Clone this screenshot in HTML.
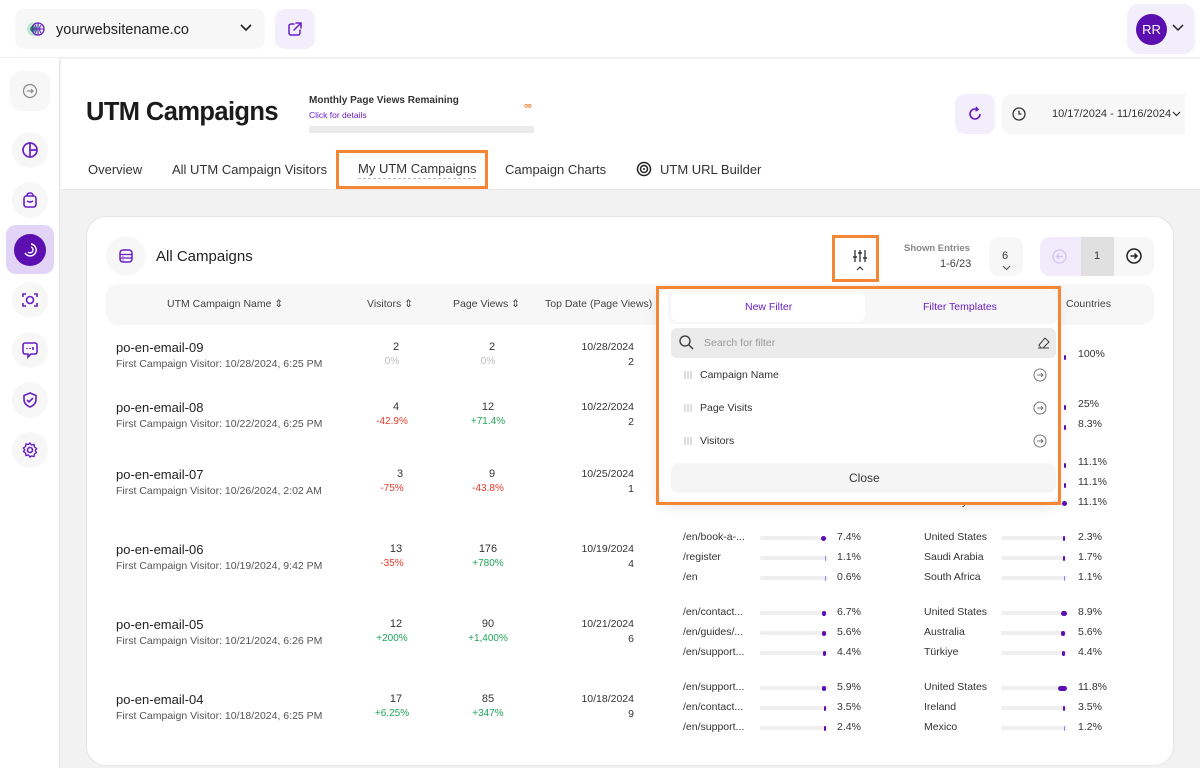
<!DOCTYPE html>
<html><head><meta charset="utf-8"><style>
*{box-sizing:border-box;margin:0;padding:0}
body{width:1200px;height:768px;overflow:hidden;background:#f2f2f2;font-family:"Liberation Sans",sans-serif;color:#222;position:relative}
.a{position:absolute}
.t{position:absolute;white-space:nowrap}
.ic{position:absolute;width:36px;height:36px;border-radius:50%;background:#f7f7f7;left:12px;display:flex;align-items:center;justify-content:center}
.name{font-size:13px;color:#222}
.sub{font-size:10.5px;color:#555}
.num{font-size:11px;color:#333;text-align:center;width:60px}
.red{color:#e53b2c}.grn{color:#1fa55a}.gry{color:#bbb}
.sm{font-size:10.5px;color:#333}
.bar{position:absolute;height:4px;background:#efefef;border-radius:2px}
.dot{position:absolute;height:5px;background:#5b0fb0;border-radius:3px;top:-0.5px}
</style></head><body>
<!-- top bar -->
<div class="a" style="left:0;top:0;width:1200px;height:58px;background:#fff;border-bottom:1px solid #eee"></div>
<div class="a" style="left:15px;top:9px;width:250px;height:40px;background:#f7f7f7;border-radius:10px"></div>
<svg class="a" style="left:26px;top:20px" width="20" height="18" viewBox="0 0 20 18"><circle cx="8" cy="9" r="7" fill="#bfe8cf"/><circle cx="7" cy="9" r="3" fill="#1aa35a"/><circle cx="12" cy="9" r="6" fill="none" stroke="#6a1fc4" stroke-width="1.3"/><path d="M6 9h12M12 3v12M9 5q3 4 0 8M15 5q-3 4 0 8" stroke="#6a1fc4" stroke-width="1" fill="none"/></svg>
<div class="t" style="left:56px;top:22px;font-size:14.5px;color:#222">yourwebsitename.co</div>
<svg class="a" style="left:239px;top:23px" width="14" height="10"><path d="M2 2l5 5 5-5" stroke="#222" stroke-width="1.6" fill="none"/></svg>
<div class="a" style="left:275px;top:9px;width:40px;height:40px;background:#f3eefc;border-radius:10px"></div>
<svg class="a" style="left:287px;top:21px" width="16" height="16" viewBox="0 0 16 16"><path d="M7 3H4a2 2 0 0 0-2 2v7a2 2 0 0 0 2 2h7a2 2 0 0 0 2-2V9M9 2h5v5M14 2L7 9" stroke="#6a1fc4" stroke-width="1.5" fill="none" stroke-linecap="round"/></svg>
<div class="a" style="left:1127px;top:4px;width:68px;height:50px;background:#f3eefc;border-radius:12px"></div>
<div class="a" style="left:1136px;top:14px;width:31px;height:31px;border-radius:50%;background:#5b0fb0;color:#fff;font-size:13px;display:flex;align-items:center;justify-content:center">RR</div>
<svg class="a" style="left:1172px;top:24px" width="12" height="8"><path d="M1 1l5 5 5-5" stroke="#222" stroke-width="1.5" fill="none"/></svg>
<!-- sidebar -->
<div class="a" style="left:0;top:58px;width:60px;height:710px;background:#fff;border-right:1px solid #e8e8e8"></div>
<div class="a" style="left:10px;top:71px;width:40px;height:40px;border-radius:12px;background:#f7f7f7"></div>
<svg class="a" style="left:22px;top:83px" width="16" height="16" viewBox="0 0 16 16"><circle cx="8" cy="8" r="6.5" fill="none" stroke="#888" stroke-width="1.2"/><path d="M5 8h6M9 6l2 2-2 2" stroke="#888" stroke-width="1.2" fill="none"/></svg>
<div class="ic" style="top:132px"><svg width="18" height="18" viewBox="0 0 18 18"><circle cx="9" cy="9" r="7" fill="none" stroke="#6a1fc4" stroke-width="1.7"/><path d="M9 2v14M9 9h7" stroke="#6a1fc4" stroke-width="1.7"/></svg></div>
<div class="ic" style="top:182px"><svg width="18" height="18" viewBox="0 0 18 18"><rect x="3" y="5" width="12" height="11" rx="2.5" fill="none" stroke="#6a1fc4" stroke-width="1.6"/><path d="M6 5q0-3 3-3t3 3M6 10q3 2 6 0" stroke="#6a1fc4" stroke-width="1.6" fill="none"/></svg></div>
<div class="a" style="left:6px;top:225px;width:48px;height:49px;border-radius:10px;background:#e2d4f6"></div>
<div class="a" style="left:14px;top:234px;width:32px;height:32px;border-radius:50%;background:#5b0fb0"></div>
<svg class="a" style="left:20px;top:240px" width="20" height="20" viewBox="0 0 20 20"><path d="M11 4a6 6 0 1 1-6 9" stroke="#fff" stroke-width="1.4" fill="none"/><path d="M11 7a3 3 0 1 1-3 5" stroke="#fff" stroke-width="1.4" fill="none"/></svg>
<div class="ic" style="top:282px"><svg width="18" height="18" viewBox="0 0 18 18"><path d="M2 6V3h3M13 3h3v3M16 12v3h-3M5 15H2v-3" stroke="#6a1fc4" stroke-width="1.6" fill="none"/><circle cx="9" cy="9" r="3.5" fill="none" stroke="#6a1fc4" stroke-width="1.6"/></svg></div>
<div class="ic" style="top:332px"><svg width="18" height="18" viewBox="0 0 18 18"><path d="M4 2h10a2 2 0 0 1 2 2v7a2 2 0 0 1-2 2h-4l-3 3v-3H4a2 2 0 0 1-2-2V4a2 2 0 0 1 2-2z" fill="none" stroke="#6a1fc4" stroke-width="1.6"/><path d="M6 7v1M9 7v1M12 6v3" stroke="#6a1fc4" stroke-width="1.6"/></svg></div>
<div class="ic" style="top:382px"><svg width="18" height="18" viewBox="0 0 18 18"><path d="M9 2l6 2.5v4q0 5-6 7.5-6-2.5-6-7.5v-4z" fill="none" stroke="#6a1fc4" stroke-width="1.6"/><path d="M6 9l2 2 4-4" stroke="#6a1fc4" stroke-width="1.6" fill="none"/></svg></div>
<div class="ic" style="top:432px"><svg width="18" height="18" viewBox="0 0 18 18"><circle cx="9" cy="9" r="2.5" fill="none" stroke="#6a1fc4" stroke-width="1.6"/><path d="M9 2l1.5 2 2.5-.5.5 2.5 2 1.5-1.2 2 1.2 2-2 1.5-.5 2.5-2.5-.5L9 16l-1.5-2-2.5.5-.5-2.5-2-1.5L3.7 9 2.5 7l2-1.5L5 3l2.5.5z" fill="none" stroke="#6a1fc4" stroke-width="1.4"/></svg></div>
<!-- header -->
<div class="a" style="left:61px;top:59px;width:1139px;height:131px;background:#fff;border-bottom:1px solid #e8e8e8"></div>
<div class="t" style="left:86px;top:98px;font-size:25.5px;font-weight:bold;color:#1b1b1b;letter-spacing:-0.6px">UTM Campaigns</div>
<div class="t" style="left:309px;top:95px;font-size:10px;font-weight:bold;color:#333">Monthly Page Views Remaining</div>
<div class="t" style="left:309px;top:110px;font-size:8.5px;color:#6a1fc4">Click for details</div>
<div class="t" style="left:524px;top:100px;font-size:11px;font-weight:bold;color:#f58634">∞</div>
<div class="a" style="left:309px;top:126px;width:225px;height:7px;background:#ebebeb"></div>
<div class="a" style="left:955px;top:94px;width:40px;height:40px;background:#f3eefc;border-radius:10px"></div>
<svg class="a" style="left:966px;top:105px" width="18" height="18" viewBox="0 0 18 18"><path d="M14 9a5 5 0 1 1-3-4.6" stroke="#6a1fc4" stroke-width="1.6" fill="none"/><path d="M10 2l2 2.5-2.5 1.5" stroke="#6a1fc4" stroke-width="1.6" fill="none"/></svg>
<div class="a" style="left:1002px;top:94px;width:183px;height:40px;background:#f7f7f7;border-radius:10px 0 0 10px"></div>
<svg class="a" style="left:1012px;top:107px" width="14" height="14"><circle cx="7" cy="7" r="6" stroke="#333" stroke-width="1.3" fill="none"/><path d="M7 3.5V7h2.5" stroke="#333" stroke-width="1.3" fill="none"/></svg>
<div class="t" style="left:1052px;top:108px;font-size:11px;color:#333">10/17/2024 - 11/16/2024</div>
<svg class="a" style="left:1172px;top:111px" width="9" height="6"><path d="M1 1l3.5 3.5L8 1" stroke="#333" stroke-width="1.2" fill="none"/></svg>
<!-- tabs -->
<div class="t" style="left:88px;top:162px;font-size:13px;color:#333">Overview</div>
<div class="t" style="left:172px;top:162px;font-size:13px;color:#333">All UTM Campaign Visitors</div>
<div class="a" style="left:336px;top:150px;width:152px;height:39px;border:3px solid #f58634"></div>
<div class="t" style="left:358px;top:161px;font-size:13px;color:#333;border-bottom:1px dashed #bbb;padding-bottom:2px">My UTM Campaigns</div>
<div class="t" style="left:505px;top:162px;font-size:13px;color:#333">Campaign Charts</div>
<svg class="a" style="left:636px;top:161px" width="16" height="16"><circle cx="8" cy="8" r="6.5" stroke="#222" stroke-width="1.5" fill="none"/><circle cx="8" cy="8" r="3.5" stroke="#222" stroke-width="1.5" fill="none"/><circle cx="8" cy="8" r="1" fill="#222"/></svg>
<div class="t" style="left:660px;top:162px;font-size:13px;color:#333">UTM URL Builder</div>
<!-- card -->
<div class="a" style="left:86px;top:216px;width:1088px;height:550px;background:#fff;border-radius:20px;border:1px solid #e6e6e6"></div>
<div class="a" style="left:106px;top:236px;width:40px;height:40px;border-radius:50%;background:#f7f7f7"></div>
<svg class="a" style="left:118px;top:248px" width="16" height="16"><rect x="2" y="2" width="12" height="12" rx="3" stroke="#6a1fc4" stroke-width="1.5" fill="none"/><path d="M2 6.5h12M2 10h12M4.5 8.3h1M4.5 12h1" stroke="#6a1fc4" stroke-width="1.2"/></svg>
<div class="t" style="left:156px;top:248px;font-size:15px;color:#222">All Campaigns</div>
<div class="a" style="left:832px;top:235px;width:47px;height:47px;border:3px solid #f58634"></div>
<svg class="a" style="left:852px;top:248px" width="16" height="24" viewBox="0 0 16 24"><path d="M3 2v12M8 2v12M13 2v12" stroke="#333" stroke-width="1.3"/><path d="M1 9h4M6 5h4M11 10h4" stroke="#333" stroke-width="1.5"/><path d="M5 22l3-3 3 3" stroke="#333" stroke-width="1.2" fill="none"/></svg>
<div class="t" style="left:904px;top:243px;font-size:9.5px;color:#888;font-weight:bold">Shown Entries</div>
<div class="t" style="left:940px;top:258px;font-size:11px;color:#444">1-6/23</div>
<div class="a" style="left:989px;top:237px;width:34px;height:39px;border-radius:10px;background:#f7f7f7"></div>
<div class="t" style="left:1002px;top:250px;font-size:11px;color:#333">6</div>
<svg class="a" style="left:1002px;top:265px" width="9" height="6"><path d="M1 1l3.5 3.5L8 1" stroke="#555" stroke-width="1.1" fill="none"/></svg>
<div class="a" style="left:1040px;top:237px;width:114px;height:39px;border-radius:10px;background:#f7f7f7"></div>
<div class="a" style="left:1040px;top:237px;width:41px;height:39px;border-radius:10px 0 0 10px;background:#f1ebfb"></div>
<div class="a" style="left:1081px;top:237px;width:33px;height:39px;background:#e0e0e0"></div>
<svg class="a" style="left:1052px;top:249px" width="15" height="15"><circle cx="7.5" cy="7.5" r="6.5" stroke="#d3c2f0" stroke-width="1.3" fill="none"/><path d="M11 7.5H4.5M7 5l-2.5 2.5L7 10" stroke="#d3c2f0" stroke-width="1.3" fill="none"/></svg>
<div class="t" style="left:1094px;top:250px;font-size:11px;color:#333">1</div>
<svg class="a" style="left:1126px;top:248px" width="16" height="16"><circle cx="8" cy="8" r="7" stroke="#222" stroke-width="1.5" fill="none"/><path d="M4.5 8H11M8.5 5.5L11 8l-2.5 2.5" stroke="#222" stroke-width="1.5" fill="none"/></svg>
<!-- table header -->
<div class="a" style="left:106px;top:284px;width:1048px;height:41px;border-radius:12px;background:#f7f7f7"></div>
<div class="t" style="left:167px;top:298px;font-size:10.5px;color:#444">UTM Campaign Name ⇕</div>
<div class="t" style="left:367px;top:298px;font-size:10.5px;color:#444">Visitors ⇕</div>
<div class="t" style="left:453px;top:298px;font-size:10.5px;color:#444">Page Views ⇕</div>
<div class="t" style="left:545px;top:298px;font-size:10.5px;color:#444">Top Date (Page Views)</div>
<div class="t" style="left:1066px;top:298px;font-size:10.5px;color:#444">Countries</div>
<!-- rows -->
<div class="t name" style="left:116px;top:340px">po-en-email-09</div><div class="t sub" style="left:116px;top:358px">First Campaign Visitor: 10/28/2024, 6:25 PM</div>
<div class="t num" style="left:366px;top:341px">2</div><div class="t num gry" style="left:362px;top:356px;font-size:10px">0%</div>
<div class="t num" style="left:462px;top:341px">2</div><div class="t num gry" style="left:458px;top:356px;font-size:10px">0%</div>
<div class="t sm" style="right:566px;top:341px">10/28/2024</div><div class="t sm" style="right:566px;top:356px">2</div>

<div class="t name" style="left:116px;top:400px">po-en-email-08</div><div class="t sub" style="left:116px;top:418px">First Campaign Visitor: 10/22/2024, 6:25 PM</div>
<div class="t num" style="left:366px;top:401px">4</div><div class="t num red" style="left:362px;top:416px;font-size:10px">-42.9%</div>
<div class="t num" style="left:458px;top:401px">12</div><div class="t num grn" style="left:458px;top:416px;font-size:10px">+71.4%</div>
<div class="t sm" style="right:566px;top:401px">10/22/2024</div><div class="t sm" style="right:566px;top:416px">2</div>

<div class="t name" style="left:116px;top:467px">po-en-email-07</div><div class="t sub" style="left:116px;top:485px">First Campaign Visitor: 10/26/2024, 2:02 AM</div>
<div class="t num" style="left:370px;top:468px">3</div><div class="t num red" style="left:362px;top:483px;font-size:10px">-75%</div>
<div class="t num" style="left:462px;top:468px">9</div><div class="t num red" style="left:458px;top:483px;font-size:10px">-43.8%</div>
<div class="t sm" style="right:566px;top:468px">10/25/2024</div><div class="t sm" style="right:566px;top:483px">1</div>

<div class="t name" style="left:116px;top:542px">po-en-email-06</div><div class="t sub" style="left:116px;top:560px">First Campaign Visitor: 10/19/2024, 9:42 PM</div>
<div class="t num" style="left:366px;top:543px">13</div><div class="t num red" style="left:362px;top:558px;font-size:10px">-35%</div>
<div class="t num" style="left:458px;top:543px">176</div><div class="t num grn" style="left:458px;top:558px;font-size:10px">+780%</div>
<div class="t sm" style="right:566px;top:543px">10/19/2024</div><div class="t sm" style="right:566px;top:558px">4</div>

<div class="t name" style="left:116px;top:617px">po-en-email-05</div><div class="t sub" style="left:116px;top:635px">First Campaign Visitor: 10/21/2024, 6:26 PM</div>
<div class="t num" style="left:366px;top:618px">12</div><div class="t num grn" style="left:362px;top:633px;font-size:10px">+200%</div>
<div class="t num" style="left:458px;top:618px">90</div><div class="t num grn" style="left:458px;top:633px;font-size:10px">+1,400%</div>
<div class="t sm" style="right:566px;top:618px">10/21/2024</div><div class="t sm" style="right:566px;top:633px">6</div>

<div class="t name" style="left:116px;top:692px">po-en-email-04</div><div class="t sub" style="left:116px;top:710px">First Campaign Visitor: 10/18/2024, 6:25 PM</div>
<div class="t num" style="left:366px;top:693px">17</div><div class="t num grn" style="left:362px;top:708px;font-size:10px">+6.25%</div>
<div class="t num" style="left:458px;top:693px">85</div><div class="t num grn" style="left:458px;top:708px;font-size:10px">+347%</div>
<div class="t sm" style="right:566px;top:693px">10/18/2024</div><div class="t sm" style="right:566px;top:708px">9</div>

<!-- stats right columns -->
<div class="t sm" style="left:683px;top:531px">/en/book-a-...</div><div class="bar" style="left:760px;top:536px;width:68px"><div class="dot" style="right:2px;width:5px"></div></div><div class="t sm" style="left:837px;top:531px">7.4%</div>
<div class="t sm" style="left:683px;top:551px">/register</div><div class="bar" style="left:760px;top:556px;width:68px"><div class="dot" style="right:2px;width:1px;background:#a57be0"></div></div><div class="t sm" style="left:837px;top:551px">1.1%</div>
<div class="t sm" style="left:683px;top:571px">/en</div><div class="bar" style="left:760px;top:576px;width:68px"><div class="dot" style="right:2px;width:1px;background:#a57be0"></div></div><div class="t sm" style="left:837px;top:571px">0.6%</div>
<div class="t sm" style="left:683px;top:606px">/en/contact...</div><div class="bar" style="left:760px;top:611px;width:68px"><div class="dot" style="right:2px;width:4px"></div></div><div class="t sm" style="left:837px;top:606px">6.7%</div>
<div class="t sm" style="left:683px;top:626px">/en/guides/...</div><div class="bar" style="left:760px;top:631px;width:68px"><div class="dot" style="right:2px;width:4px"></div></div><div class="t sm" style="left:837px;top:626px">5.6%</div>
<div class="t sm" style="left:683px;top:646px">/en/support...</div><div class="bar" style="left:760px;top:651px;width:68px"><div class="dot" style="right:2px;width:3px"></div></div><div class="t sm" style="left:837px;top:646px">4.4%</div>
<div class="t sm" style="left:683px;top:681px">/en/support...</div><div class="bar" style="left:760px;top:686px;width:68px"><div class="dot" style="right:2px;width:4px"></div></div><div class="t sm" style="left:837px;top:681px">5.9%</div>
<div class="t sm" style="left:683px;top:701px">/en/contact...</div><div class="bar" style="left:760px;top:706px;width:68px"><div class="dot" style="right:2px;width:2px"></div></div><div class="t sm" style="left:837px;top:701px">3.5%</div>
<div class="t sm" style="left:683px;top:721px">/en/support...</div><div class="bar" style="left:760px;top:726px;width:68px"><div class="dot" style="right:2px;width:2px"></div></div><div class="t sm" style="left:837px;top:721px">2.4%</div>

<div class="t sm" style="left:924px;top:496px">Germany</div><div class="bar" style="left:1001px;top:501px;width:66px"><div class="dot" style="right:0;width:5px"></div></div><div class="t sm" style="left:1078px;top:496px">11.1%</div>
<div class="dot" style="left:1064px;top:463px;width:2px"></div><div class="t sm" style="left:1078px;top:456px">11.1%</div>
<div class="dot" style="left:1064px;top:483px;width:2px"></div><div class="t sm" style="left:1078px;top:476px">11.1%</div>
<div class="dot" style="left:1064px;top:355px;width:2px"></div><div class="t sm" style="left:1078px;top:348px">100%</div>
<div class="dot" style="left:1064px;top:405px;width:2px"></div><div class="t sm" style="left:1078px;top:398px">25%</div>
<div class="dot" style="left:1064px;top:425px;width:2px"></div><div class="t sm" style="left:1078px;top:418px">8.3%</div>
<div class="t sm" style="left:924px;top:531px">United States</div><div class="bar" style="left:1001px;top:536px;width:66px"><div class="dot" style="right:2px;width:2px"></div></div><div class="t sm" style="left:1078px;top:531px">2.3%</div>
<div class="t sm" style="left:924px;top:551px">Saudi Arabia</div><div class="bar" style="left:1001px;top:556px;width:66px"><div class="dot" style="right:2px;width:2px"></div></div><div class="t sm" style="left:1078px;top:551px">1.7%</div>
<div class="t sm" style="left:924px;top:571px">South Africa</div><div class="bar" style="left:1001px;top:576px;width:66px"><div class="dot" style="right:2px;width:1px;background:#a57be0"></div></div><div class="t sm" style="left:1078px;top:571px">1.1%</div>
<div class="t sm" style="left:924px;top:606px">United States</div><div class="bar" style="left:1001px;top:611px;width:66px"><div class="dot" style="right:0;width:6px"></div></div><div class="t sm" style="left:1078px;top:606px">8.9%</div>
<div class="t sm" style="left:924px;top:626px">Australia</div><div class="bar" style="left:1001px;top:631px;width:66px"><div class="dot" style="right:2px;width:4px"></div></div><div class="t sm" style="left:1078px;top:626px">5.6%</div>
<div class="t sm" style="left:924px;top:646px">Türkiye</div><div class="bar" style="left:1001px;top:651px;width:66px"><div class="dot" style="right:2px;width:3px"></div></div><div class="t sm" style="left:1078px;top:646px">4.4%</div>
<div class="t sm" style="left:924px;top:681px">United States</div><div class="bar" style="left:1001px;top:686px;width:66px"><div class="dot" style="right:0;width:9px"></div></div><div class="t sm" style="left:1078px;top:681px">11.8%</div>
<div class="t sm" style="left:924px;top:701px">Ireland</div><div class="bar" style="left:1001px;top:706px;width:66px"><div class="dot" style="right:2px;width:2px"></div></div><div class="t sm" style="left:1078px;top:701px">3.5%</div>
<div class="t sm" style="left:924px;top:721px">Mexico</div><div class="bar" style="left:1001px;top:726px;width:66px"><div class="dot" style="right:2px;width:1px;background:#a57be0"></div></div><div class="t sm" style="left:1078px;top:721px">1.2%</div>

<!-- dropdown -->
<div class="a" style="left:659px;top:289px;width:399px;height:213px;background:#fff;box-shadow:0 4px 14px rgba(0,0,0,.12);border-radius:10px"></div>
<div class="a" style="left:668px;top:290px;width:390px;height:34px;background:#f7f7f7;border-radius:8px"></div>
<div class="a" style="left:671px;top:292px;width:194px;height:30px;background:#fff;border-radius:8px"></div>
<div class="t" style="left:745px;top:301px;font-size:10.5px;color:#6a1fc4">New Filter</div>
<div class="t" style="left:923px;top:301px;font-size:10.5px;color:#6a1fc4">Filter Templates</div>
<div class="a" style="left:671px;top:328px;width:385px;height:30px;background:#ebebeb;border-radius:6px"></div>
<svg class="a" style="left:679px;top:335px" width="15" height="15"><circle cx="6" cy="6" r="5" stroke="#333" stroke-width="1.3" fill="none"/><path d="M10 10l4 4" stroke="#333" stroke-width="1.3"/></svg>
<div class="t" style="left:704px;top:337px;font-size:10.5px;color:#999">Search for filter</div>
<svg class="a" style="left:1036px;top:336px" width="15" height="14"><path d="M2 12h11M3 9l6-7 4 4-6 6H5z" stroke="#444" stroke-width="1.1" fill="none"/></svg>
<svg class="a" style="left:683px;top:370px" width="10" height="10"><path d="M2 1v8M5 1v8M8 1v8" stroke="#bbb" stroke-width="1"/></svg>
<svg class="a" style="left:683px;top:403px" width="10" height="10"><path d="M2 1v8M5 1v8M8 1v8" stroke="#bbb" stroke-width="1"/></svg>
<svg class="a" style="left:683px;top:436px" width="10" height="10"><path d="M2 1v8M5 1v8M8 1v8" stroke="#bbb" stroke-width="1"/></svg>
<div class="t" style="left:700px;top:369px;font-size:10.5px;color:#333">Campaign Name</div>
<div class="t" style="left:700px;top:402px;font-size:10.5px;color:#333">Page Visits</div>
<div class="t" style="left:700px;top:435px;font-size:10.5px;color:#333">Visitors</div>
<svg class="a" style="left:1033px;top:368px" width="14" height="14"><circle cx="7" cy="7" r="6" stroke="#777" stroke-width="1" fill="none"/><path d="M4 7h6M8 5l2 2-2 2" stroke="#777" stroke-width="1" fill="none"/></svg>
<svg class="a" style="left:1033px;top:401px" width="14" height="14"><circle cx="7" cy="7" r="6" stroke="#777" stroke-width="1" fill="none"/><path d="M4 7h6M8 5l2 2-2 2" stroke="#777" stroke-width="1" fill="none"/></svg>
<svg class="a" style="left:1033px;top:434px" width="14" height="14"><circle cx="7" cy="7" r="6" stroke="#777" stroke-width="1" fill="none"/><path d="M4 7h6M8 5l2 2-2 2" stroke="#777" stroke-width="1" fill="none"/></svg>
<div class="a" style="left:671px;top:463px;width:385px;height:30px;background:#f5f5f5;border-radius:8px"></div>
<div class="t" style="left:849px;top:471px;font-size:12px;color:#333">Close</div>
<div class="a" style="left:656px;top:286px;width:405px;height:219px;border:3px solid #f58634"></div>
</body></html>
